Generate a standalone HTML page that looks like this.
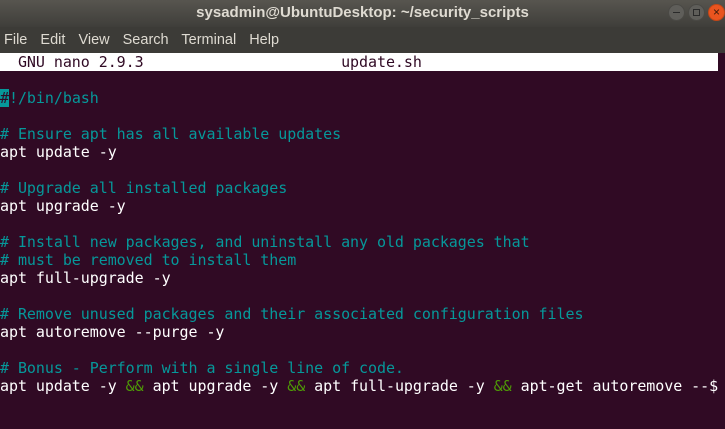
<!DOCTYPE html>
<html><head><style>
body{margin:0;width:725px;height:429px;overflow:hidden;background:#300a24;font-family:"Liberation Sans",sans-serif}
#title{height:27px;background:linear-gradient(#57554f,#3f3e3a);color:#dfdbd2;font-weight:bold;font-size:15px;text-align:center;line-height:26px;position:relative}
#menu{height:26px;background:#3c3b37;color:#dfdbd2;font-size:14.5px;line-height:26px;padding-left:4px;word-spacing:2px}
#menu span{margin-right:7px}
.b{position:absolute;top:4px;width:17px;height:17px;border-radius:50%;background:#5f5e5a;border:1px solid #4a4945;box-sizing:border-box}
pre{margin:0;font-family:"DejaVu Sans Mono","Liberation Mono",monospace;font-size:15px;line-height:18px;color:#fff;letter-spacing:-0.055px}
.c{color:#06989a}.g{color:#4e9a06}
.bar{background:#fff;color:#300a24;width:718px;display:block}
.cur{background:#06989a;color:#300a24}
</style></head><body>
<div id="title">sysadmin@UbuntuDesktop: ~/security_scripts
<div class="b" style="left:668px"><div style="position:absolute;left:4px;top:7px;width:7px;height:1px;background:#2a2a2a"></div></div>
<div class="b" style="left:688px"><div style="position:absolute;left:4px;top:4px;width:7px;height:7px;border:1px solid #2a2a2a;box-sizing:border-box"></div></div>
<div class="b" style="left:708px;background:#e9541f;border-color:#c44717;color:#3a1a0a;font-size:12px;line-height:15px;font-weight:normal;text-align:center">×</div>
</div>
<div id="menu"><span>File</span> <span>Edit</span> <span>View</span> <span>Search</span> <span>Terminal</span> <span>Help</span></div>
<pre><span class="bar">  GNU nano 2.9.3                      update.sh                                </span>
<span class="cur">#</span><span class="c">!/bin/bash</span>

<span class="c"># Ensure apt has all available updates</span>
apt update -y

<span class="c"># Upgrade all installed packages</span>
apt upgrade -y

<span class="c"># Install new packages, and uninstall any old packages that</span>
<span class="c"># must be removed to install them</span>
apt full-upgrade -y

<span class="c"># Remove unused packages and their associated configuration files</span>
apt autoremove --purge -y

<span class="c"># Bonus - Perform with a single line of code.</span>
apt update -y <span class="g">&amp;&amp;</span> apt upgrade -y <span class="g">&amp;&amp;</span> apt full-upgrade -y <span class="g">&amp;&amp;</span> apt-get autoremove --$
</pre>
</body></html>
